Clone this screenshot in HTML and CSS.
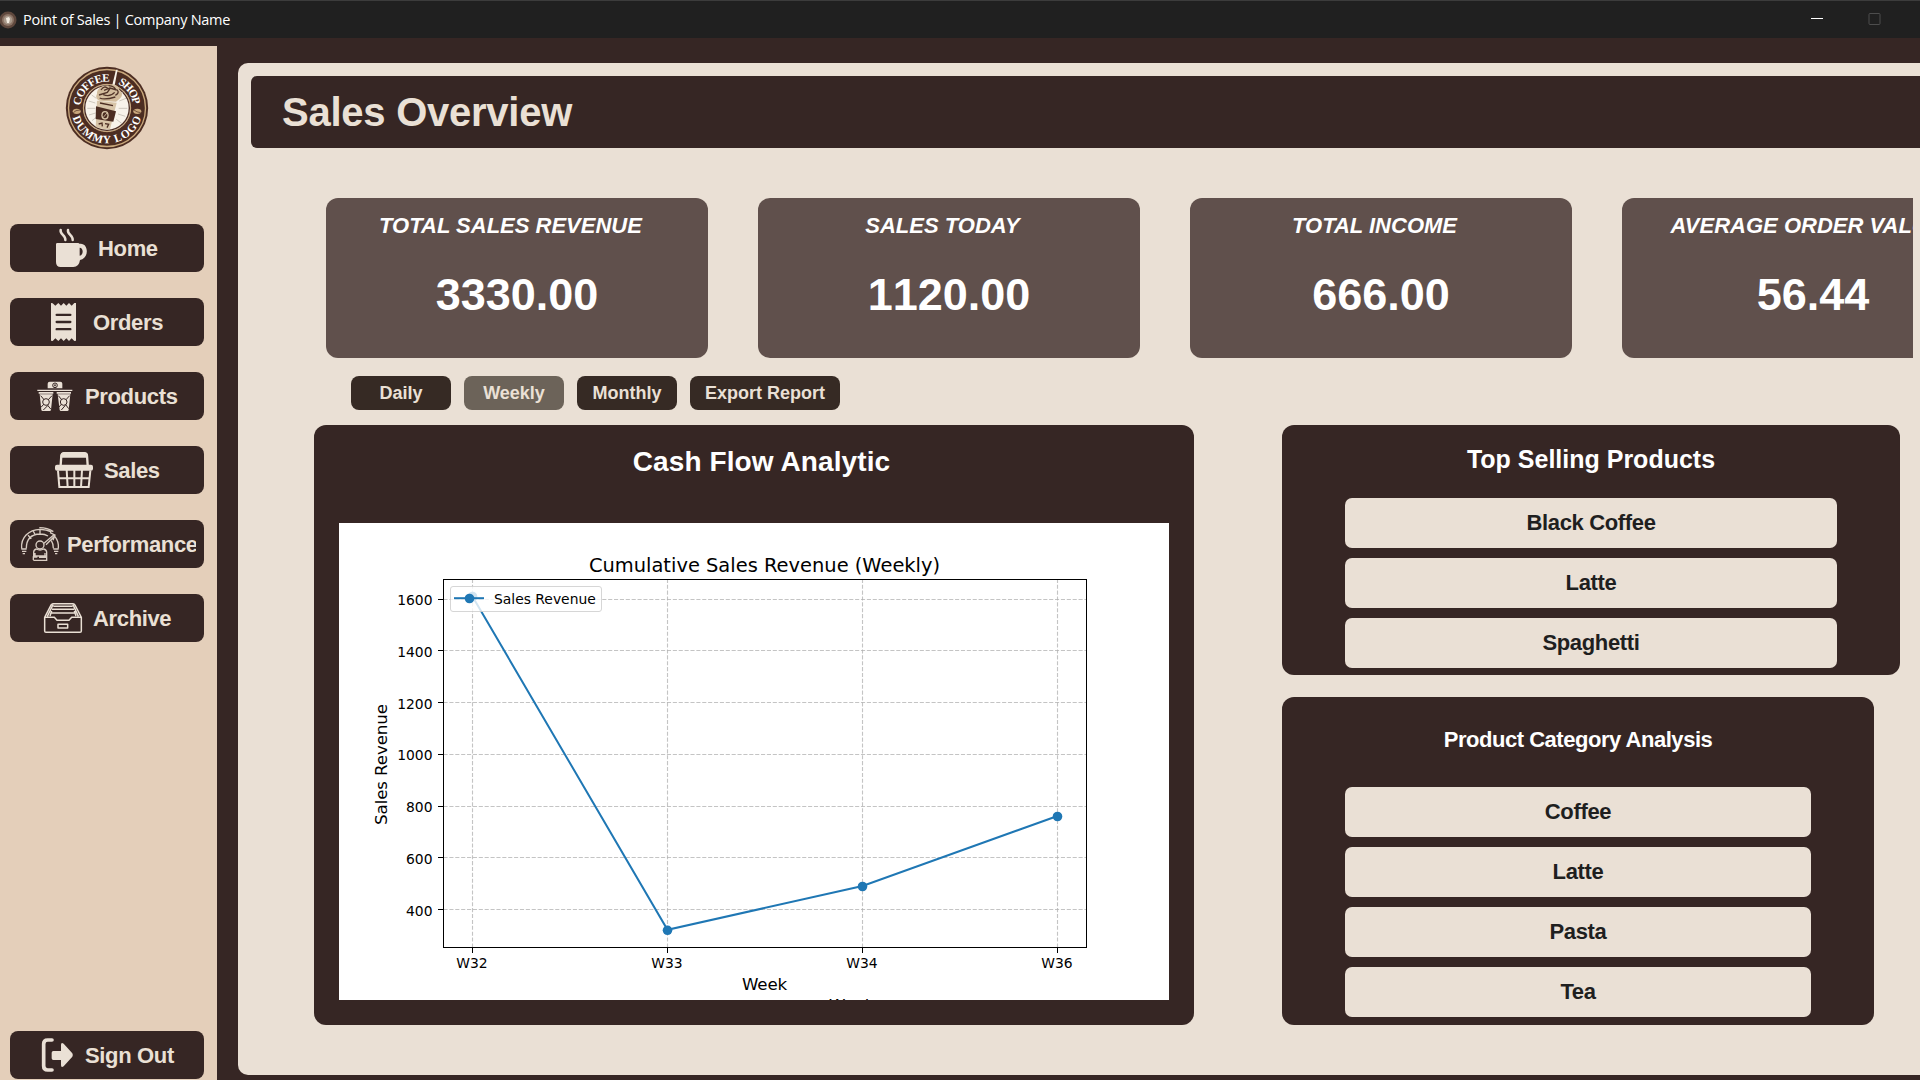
FILE: index.html
```html
<!DOCTYPE html>
<html lang="en">
<head>
<meta charset="utf-8">
<title>Point of Sales | Company Name</title>
<link rel="stylesheet" href="styles.css">
</head>
<body>
<header class="titlebar">
  <svg class="app-icon" width="17" height="18" viewBox="0 0 17 18"><circle cx="8" cy="9" r="8.500" fill="#5f483d"/><circle cx="8" cy="9" r="6" fill="#8b7365"/><circle cx="8" cy="9" r="4.300" fill="#a99a8c"/><path d="M6 7l3-1 1 2-1 4H7z" fill="#f3ebe0"/></svg>
  <span class="app-title">Point of Sales | Company Name</span>
  <svg class="win-controls" width="80" height="38" viewBox="0 0 80 38"><path d="M11 18.500h12" stroke="#fff"/><rect x="69" y="13.500" width="11" height="11" rx="1" fill="none" stroke="#4d4d4d"/></svg>
</header>
<div class="app">
  <aside class="sidebar">
    <svg class="logo" width="84" height="84" viewBox="195 198 252 252">
      <defs>
        <path id="arc-left" d="M242 317A79 79 0 0 1 335 246"/>
        <path id="arc-right" d="M354 252A79 79 0 0 1 399 314"/>
        <path id="arc-bottom" d="M218 352A107 107 0 0 0 424 352"/>
      </defs>
      <circle cx="321" cy="324" r="123.500" fill="#4c2d22"/>
      <circle cx="321" cy="324" r="115.500" fill="none" stroke="#c9a87c" stroke-width="4"/>
      <circle cx="321" cy="324" r="71" fill="#f8f3ea" stroke="#c9a87c" stroke-width="3"/>
      <circle cx="321" cy="324" r="67" fill="none" stroke="#4c2d22" stroke-width="4"/>
      <path d="M275 285l14 10M266 303l20 6M262 325h24M267 345l20-6M276 362l15-12M360 284l8-7M358 303l20-8M356 325h26M354 342l22 7M349 358l17 13" stroke="#c5bfb5" stroke-width="2.500"/>
      <path d="M336 259l12-50h5l-10 52z" fill="#f8f3ea"/>
      <path d="M291 282c-2-18 20-29 36-25 14-9 31 1 31 13 12 9 9 20 1 26l-11 9-49-3c-10-3-13-13-8-20z" fill="#d3bd9d"/>
      <path d="M303 270q10-15 20-5m3-8q20 2 21 14m-50 14l25-8 9-13m-32 30q14 7 47-3m-36-7q20 8 34-7m7-8q9 10-5 17m-34-15l18-7 20 6" fill="none" stroke="#513428" stroke-width="4"/>
      <path d="M291 302l59 6-20 80q-18 2-43-7z" fill="#d8c5a8"/>
      <path d="M288 319l60 15-8 31-53-8z" fill="#4c2d22"/>
      <ellipse cx="315" cy="346" rx="11" ry="13" fill="#d8c5a8"/><ellipse cx="315" cy="346" rx="7" ry="9" fill="#4c2d22"/><path d="M321 339l-12 14" stroke="#d8c5a8" stroke-width="2.500"/>
      <path d="M296 372l10-3 1 10M315 371l11 2-5 10M300 309l39 8" fill="none" stroke="#4c2d22" stroke-width="4"/>
      <ellipse cx="230" cy="334" rx="12" ry="8" fill="#c9a87c"/><path d="M220 338q6-8 20-8" fill="none" stroke="#4c2d22" stroke-width="2"/>
      <ellipse cx="412" cy="334" rx="12" ry="8" fill="#c9a87c"/><path d="M402 330q8 7 20 8" fill="none" stroke="#4c2d22" stroke-width="2"/>
      <g class="logo-text">
        <text><textPath href="#arc-left" textLength="126">COFFEE</textPath></text>
        <text><textPath href="#arc-right" textLength="80">SHOP</textPath></text>
        <text><textPath href="#arc-bottom" textLength="276">DUMMY LOGO</textPath></text>
      </g>
    </svg>
    <nav class="nav">
      <a class="nav-btn"><svg width="88" height="48" viewBox="30 42 264 144"><g fill="#eae0d5"><path d="M168 103q0-4 4-4h62q4 0 4 2h4c24 0 26 44-2 49q-3 21-20 21h-38q-14 0-14-15zM239 113v24c12-1 12-24 0-24z" fill-rule="evenodd"/></g><path d="M182 60c-3 13 16 16 14 30M204 60c-3 13 16 16 14 30" fill="none" stroke="#eae0d5" stroke-width="7.500" stroke-linecap="round"/></svg><span>Home</span></a>
      <a class="nav-btn"><svg width="83" height="48" viewBox="30 264 249 144"><path d="M153 279l5 1 8 7 9-8 8 8 8-8 8 8 8-8 8 8 8-8 5 0v113l-5 1-8-8-8 8-8-8-8 8-8-8-8 8-9-8-8 8-5-1z" fill="#eae0d5"/><path d="M170 314.500h41M170 336h41M170 357.500h41" stroke="#362624" stroke-width="7" stroke-linecap="round"/></svg><span>Orders</span></a>
      <a class="nav-btn"><svg width="75" height="48" viewBox="30 486 225 144"><g fill="#eae0d5"><path d="M143 535v-14q0-6 6-6h32q6 0 6 6v14z"/><path d="M112 539h105v4H112z"/><path d="M116 546h44v5h-44zM170 546h43v5h-43z"/><path d="M119 553h39l-5 47q-1 3-4 3h-21q-3 0-4-3zM173 553h38l-5 47q-1 3-4 3h-19q-3 0-4-3z"/></g><g fill="none" stroke="#362624" stroke-width="3"><circle cx="165" cy="526" r="7"/><circle cx="165" cy="526" r="2"/><circle cx="138" cy="576" r="10"/><circle cx="191" cy="576" r="10"/><path d="M122 557l10 12M156 557l-11 12M131 583l-8 9M143 586l10 12M130 600l14-14M175 557l10 12M209 557l-11 12M184 583l-8 9M197 584l9 12M184 600l12-14"/></g></svg><span>Products</span></a>
      <a class="nav-btn"><svg width="94" height="48" viewBox="30 48 282 144"><path d="M182 105l2-28q1-6 6-6h65q5 0 6 6l2 28" fill="none" stroke="#eae0d5" stroke-width="7"/><path d="M182 83v-8q2-9 9-9h62q9 0 11 9v8z" fill="#eae0d5"/><rect x="165" y="104" width="114" height="18" rx="6" fill="#eae0d5"/><path d="M174 122l4 49h88l5-49M176 145h92M200 120l3 52M223 120v52M246 120l-3 52" fill="none" stroke="#eae0d5" stroke-width="6"/></svg><span>Sales</span></a>
      <a class="nav-btn"><svg width="57" height="48" viewBox="30 270 171 144"><g fill="none" stroke="#d9cdc3" stroke-width="4"><path d="M65 355c-3-31 20-56 55-57q20 0 34 8M175 355q2-20-10-35M79 355c0-26 14-42 41-43q15 0 24 6M160 355q0-14-6-23M64 357h16M160 357h16M66 364h13M162 364h13M68 371h7M165 371h7M118 293q25 0 42 12M120 298v14M84 316l10 10M99 302l7 13M162 314l-30 26M165 317l-27 27M150 308l15 7-6 16"/><circle cx="120" cy="345" r="12"/><path d="M101 378v-11q0-8 8-10 11 6 22 0 9 2 9 10v11zM105 369v8M135 369v8M100 390v-9h12M117 382h23v9h-40"/></g></svg><span>Performance</span></a>
      <a class="nav-btn"><svg width="83" height="48" viewBox="30 492 249 144"><g fill="none" stroke="#eae0d5" stroke-width="4.500" stroke-linejoin="round"><path d="M134 562l19-37q3-4 6-4h60q4 0 6 4l19 37v41q0 4-4 4H138q-4 0-4-4zM134 562h29l8 9h36l8-9h29M142 559l17-35M235 559l-16-35M160 529h58M156 538h66M152 549h74M150 558l5-15M228 558l-5-15"/><rect x="174" y="583" width="29" height="11"/></g></svg><span>Archive</span></a>
      <a class="nav-btn sign-out"><svg width="75" height="48" viewBox="30 93 225 144"><path d="M156 120h-13q-12 0-12 12v66q0 12 12 12h13" fill="none" stroke="#eae0d5" stroke-width="11" stroke-linecap="round"/><path d="M160 153h23v-18q0-10 8-4l26 29q3 5 0 10l-26 29q-8 6-8-4v-15h-23q-5 0-5-5v-17q0-5 5-5z" fill="#eae0d5"/></svg><span>Sign Out</span></a>
    </nav>
  </aside>
  <main class="panel">
    <h1 class="page-title">Sales Overview</h1>
    <section class="cards">
      <article class="card"><h2>TOTAL SALES REVENUE</h2><p>3330.00</p></article>
      <article class="card"><h2>SALES TODAY</h2><p>1120.00</p></article>
      <article class="card"><h2>TOTAL INCOME</h2><p>666.00</p></article>
      <article class="card"><h2>AVERAGE ORDER VALUE</h2><p>56.44</p></article>
    </section>
    <div class="filters">
      <button>Daily</button><button class="active">Weekly</button><button>Monthly</button><button class="export">Export Report</button>
    </div>
    <div class="lower">
      <section class="box cash-flow">
        <h2>Cash Flow Analytic</h2>
        <svg class="chart" width="830" height="477" viewBox="339 523 830 477">
          <g class="grid">
            <path d="M472.500 947.500v-368M667.500 947.500v-368M862.500 947.500v-368M1057.500 947.500v-368"/>
            <path d="M443.500 599.500h643M443.500 650.500h643M443.500 702.500h643M443.500 754.500h643M443.500 806.500h643M443.500 857.500h643M443.500 909.500h643"/>
          </g>
          <g fill="none" stroke="#000">
            <path d="M472.500 948v5M667.500 948v5M862.500 948v5M1057.500 948v5M443 599.500h-5M443 650.500h-5M443 702.500h-5M443 754.500h-5M443 806.500h-5M443 857.500h-5M443 909.500h-5"/>
          </g>
          <path d="M472.500 596.500L667.500 929.800 862.500 886 1057.500 816" fill="none" stroke="#1f77b4" stroke-width="2"/>
          <g fill="#1f77b4"><circle cx="472.500" cy="596.500" r="4.800"/><circle cx="667.500" cy="930.300" r="4.800"/><circle cx="862.500" cy="886.500" r="4.800"/><circle cx="1057.500" cy="816.500" r="4.800"/></g>
          <rect x="443.500" y="579.500" width="643" height="368" fill="none" stroke="#000"/>
          <rect x="450.500" y="586.500" width="151" height="25" rx="2.500" fill="#fff" fill-opacity=".8" stroke="#ccc" stroke-opacity=".8"/>
          <path d="M454 598.200h30" stroke="#1f77b4" stroke-width="2"/><circle cx="469.500" cy="598.500" r="4.800" fill="#1f77b4"/>
          <text class="tick" x="494" y="604">Sales Revenue</text>
          <g class="tick end"><text x="432.500" y="605">1600</text><text x="432.500" y="657">1400</text><text x="432.500" y="709">1200</text><text x="432.500" y="760">1000</text><text x="432.500" y="812">800</text><text x="432.500" y="864">600</text><text x="432.500" y="916">400</text></g>
          <g class="tick mid"><text x="472" y="968">W32</text><text x="667" y="968">W33</text><text x="862" y="968">W34</text><text x="1057" y="968">W36</text></g>
          <text class="chart-title mid" x="764.500" y="572">Cumulative Sales Revenue (Weekly)</text>
          <text class="axis mid" x="764.500" y="990">Week</text>
          <text class="axis" x="829" y="1011">Week</text>
          <text class="axis mid" transform="translate(386.500 764.500) rotate(-90)">Sales Revenue</text>
        </svg>
      </section>
      <div class="lists">
        <section class="box top-selling"><h2>Top Selling Products</h2><ul><li>Black Coffee</li><li>Latte</li><li>Spaghetti</li></ul></section>
        <section class="box categories"><h2>Product Category Analysis</h2><ul><li>Coffee</li><li>Latte</li><li>Pasta</li><li>Tea</li></ul></section>
      </div>
    </div>
  </main>
</div>
</body>
</html>
```
FILE: styles.css
```css
* { box-sizing: border-box; }
body {
  margin: 0;
  width: 1920px;
  height: 1080px;
  overflow: hidden;
  background: #362624;
  font-family: "Liberation Sans", Arial, sans-serif;
  font-weight: bold;
}
h1, h2, p, ul { margin: 0; padding: 0; }
ul { list-style: none; }

.titlebar {
  height: 38px;
  display: flex;
  align-items: center;
  background: #202020;
  border-top: 1px solid #3c3c3c;
}
.app-icon { flex: none; }
.app-title {
  margin-left: 6px;
  color: #fff;
  font: 400 14.5px/20px "Open Sans", "Noto Sans", sans-serif;
  letter-spacing: -0.28px;
  white-space: nowrap;
}
.win-controls { margin: -1px 40px 0 auto; overflow: visible; }

.app { display: flex; height: 1042px; }
.sidebar {
  flex: none;
  width: 217px;
  margin-top: 8px;
  padding: 20px 13px 1px 10px;
  display: flex;
  flex-direction: column;
  background: #e4cfba;
}
.logo { display: block; margin-left: 55px; flex: none; }
.logo-text {
  fill: #fff;
  font: bold 34px "Liberation Serif", serif;
}
.nav {
  flex: 1;
  margin-top: 74px;
  display: flex;
  flex-direction: column;
  gap: 26px;
}
.nav-btn {
  height: 48px;
  flex: none;
  padding-right: 8px;
  display: flex;
  align-items: center;
  border-radius: 8px;
  background: #362624;
  color: #eae0d5;
  font-size: 22px;
  letter-spacing: -0.35px;
}
.nav-btn svg { flex: none; }
.nav-btn span {
  flex: 1;
  padding-top: 2px;
  overflow: hidden;
  white-space: nowrap;
}
.sign-out { margin-top: auto; }

.panel {
  flex: 1;
  min-width: 0;
  height: 1012px;
  margin: 25px 0 0 21px;
  padding-top: 13px;
  border-radius: 10px 0 0 10px;
  background: #eae0d5;
}
.page-title {
  height: 72px;
  margin-left: 13px;
  padding-left: 31px;
  border-radius: 6px 0 0 6px;
  background: #362624;
  color: #eae0d5;
  font-size: 40px;
  letter-spacing: -0.25px;
  line-height: 72px;
}
.cards {
  margin: 50px 7px 0 88px;
  display: flex;
  gap: 50px;
  overflow: hidden;
}
.card {
  flex: none;
  width: 382px;
  height: 160px;
  border-radius: 12px;
  background: #60504c;
  color: #fff;
  text-align: center;
}
.card h2 {
  padding: 15px 13px 0 0;
  font-size: 22px;
  font-style: italic;
  line-height: 25px;
}
.card p {
  margin-top: 31px;
  font-size: 45px;
  line-height: 52px;
  font-kerning: none;
}
.filters { margin: 18px 0 0 113px; display: flex; gap: 13px; }
.filters button {
  width: 100px;
  height: 34px;
  padding: 0;
  border: 0;
  border-radius: 8px;
  background: #362a24;
  color: #eae0d5;
  font: bold 18px "Liberation Sans", Arial, sans-serif;
}
.filters .active { background: #6c6359; }
.filters .export { width: 150px; }

.lower { margin: 15px 0 0 76px; display: flex; gap: 88px; }
.box {
  border-radius: 12px;
  background: #362624;
  color: #fff;
  text-align: center;
}
.cash-flow { width: 880px; height: 600px; padding: 0 25px; }
.cash-flow h2 {
  height: 98px;
  padding: 21px 0 0 15px;
  font-size: 28px;
  letter-spacing: 0.1px;
  line-height: 32px;
}
.chart { display: block; background: #fff; }
.grid path {
  fill: none;
  stroke: #b0b0b0;
  stroke-width: 1.11;
  stroke-opacity: .75;
  stroke-dasharray: 4.1 1.78;
}
.chart text { font-family: "DejaVu Sans", sans-serif; font-weight: 400; }
.chart .tick { font-size: 13.89px; }
.chart .axis { font-size: 16.67px; letter-spacing: -0.1px; }
.chart .chart-title { font-size: 19.44px; }
.mid { text-anchor: middle; }
.end { text-anchor: end; }

.lists { display: flex; flex-direction: column; gap: 22px; }
.top-selling { width: 618px; height: 250px; padding: 0 63px; }
.categories { width: 592px; height: 328px; padding: 0 63px; }
.top-selling h2 { height: 73px; padding-top: 19px; font-size: 25px; line-height: 30px; }
.categories h2 {
  height: 90px;
  padding-top: 30px;
  font-size: 22px;
  letter-spacing: -0.47px;
  line-height: 25px;
}
.box ul { display: flex; flex-direction: column; gap: 10px; }
.box li {
  height: 50px;
  border-radius: 7px;
  background: #eae0d5;
  color: #1f1f1f;
  font-size: 22px;
  letter-spacing: -0.35px;
  line-height: 50px;
}
```
